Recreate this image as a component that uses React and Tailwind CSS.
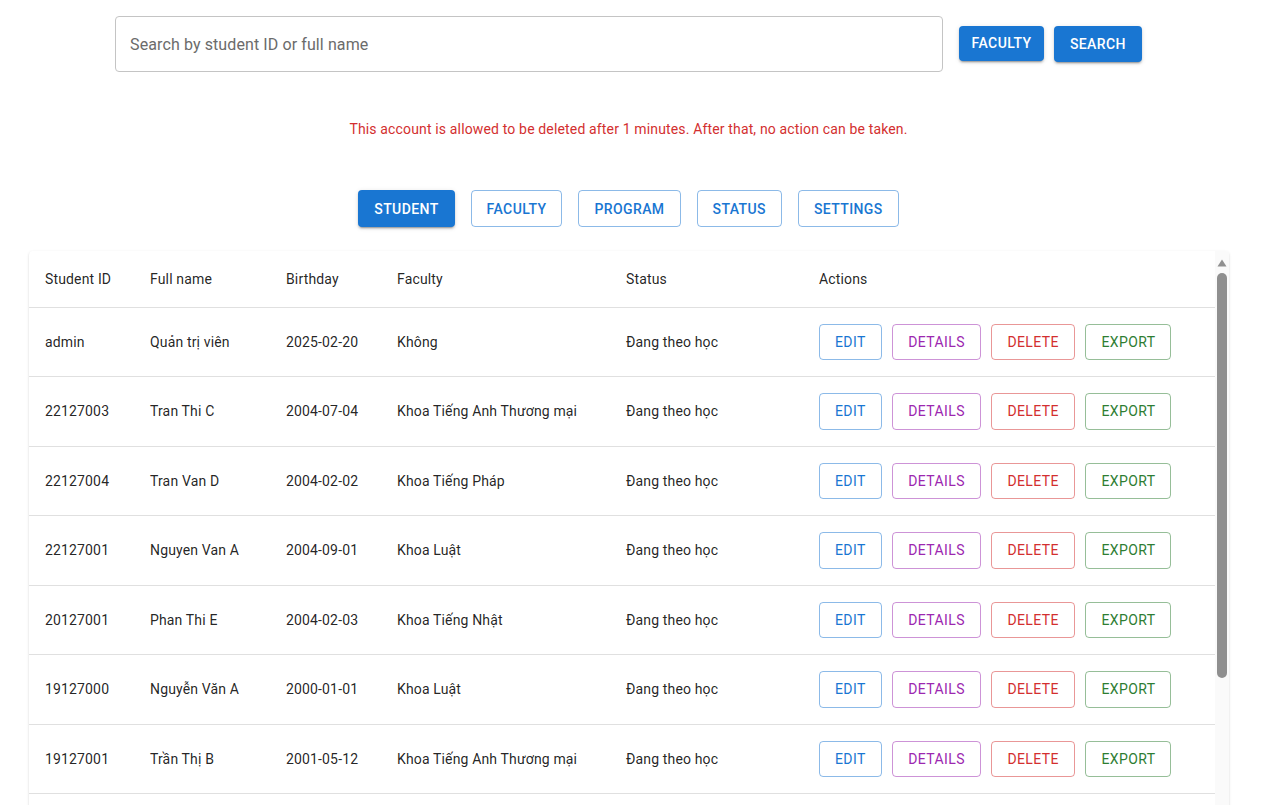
import { useState } from 'react';

const students = [
  { id: 'admin', name: 'Quản trị viên', birthday: '2025-02-20', faculty: 'Không', status: 'Đang theo học' },
  { id: '22127003', name: 'Tran Thi C', birthday: '2004-07-04', faculty: 'Khoa Tiếng Anh Thương mại', status: 'Đang theo học' },
  { id: '22127004', name: 'Tran Van D', birthday: '2004-02-02', faculty: 'Khoa Tiếng Pháp', status: 'Đang theo học' },
  { id: '22127001', name: 'Nguyen Van A', birthday: '2004-09-01', faculty: 'Khoa Luật', status: 'Đang theo học' },
  { id: '20127001', name: 'Phan Thi E', birthday: '2004-02-03', faculty: 'Khoa Tiếng Nhật', status: 'Đang theo học' },
  { id: '19127000', name: 'Nguyễn Văn A', birthday: '2000-01-01', faculty: 'Khoa Luật', status: 'Đang theo học' },
  { id: '19127001', name: 'Trần Thị B', birthday: '2001-05-12', faculty: 'Khoa Tiếng Anh Thương mại', status: 'Đang theo học' },
  { id: '19127002', name: 'Lê Văn C', birthday: '2001-03-15', faculty: 'Khoa Tiếng Pháp', status: 'Đang theo học' },
  { id: '19127003', name: 'Phạm Thị D', birthday: '2001-11-20', faculty: 'Khoa Tiếng Nhật', status: 'Đã tốt nghiệp' },
  { id: '19127004', name: 'Hoàng Văn E', birthday: '2001-08-08', faculty: 'Khoa Luật', status: 'Đang theo học' },
  { id: '19127005', name: 'Võ Thị F', birthday: '2001-12-30', faculty: 'Khoa Tiếng Anh Thương mại', status: 'Đang theo học' },
];

const tabs = ['STUDENT', 'FACULTY', 'PROGRAM', 'STATUS', 'SETTINGS'];

const containedShadow =
  'shadow-[0px_3px_1px_-2px_rgba(0,0,0,0.2),0px_2px_2px_0px_rgba(0,0,0,0.14),0px_1px_5px_0px_rgba(0,0,0,0.12)]';

const actionBtn = 'h-[36.5px] rounded border px-[15px] text-sm tracking-[0.4px]';

const App = () => {
  const [query, setQuery] = useState('');
  const [tab, setTab] = useState('STUDENT');

  return (
    <div className="h-screen overflow-hidden bg-white font-['Roboto',sans-serif] text-[rgba(0,0,0,0.87)]">
      <div className="w-[1257px]">
        <div className="flex items-center justify-center pt-4">
          <input
            type="text"
            placeholder="Search by student ID or full name"
            value={query}
            onChange={(e) => setQuery(e.target.value)}
            className="h-[56px] w-[828px] rounded border border-[#c4c4c4] px-[14px] text-base tracking-[0.1px] text-[rgba(0,0,0,0.87)] placeholder-[#6b6b6b] focus:outline-none"
          />
          <button
            type="button"
            className={`ml-4 -mt-[2px] h-[35px] rounded bg-[#1976d2] px-[12.5px] text-sm font-medium tracking-[0.4px] text-white ${containedShadow}`}
          >
            FACULTY
          </button>
          <button
            type="button"
            className={`ml-[10px] h-[36px] rounded bg-[#1976d2] px-4 text-sm font-medium tracking-[0.4px] text-white ${containedShadow}`}
          >
            SEARCH
          </button>
        </div>

        <p className="mt-[47px] text-center text-sm leading-5 tracking-[0.15px] text-[#d32f2f]">
          This account is allowed to be deleted after 1 minutes. After that, no action can be taken.
        </p>

        <div className="mt-[51px] flex justify-center gap-4">
          {tabs.map((t) =>
            t === tab ? (
              <button
                key={t}
                type="button"
                onClick={() => setTab(t)}
                className={`h-[37px] rounded bg-[#1976d2] px-4 text-sm font-medium tracking-[0.4px] text-white ${containedShadow}`}
              >
                {t}
              </button>
            ) : (
              <button
                key={t}
                type="button"
                onClick={() => setTab(t)}
                className="h-[37px] rounded border border-[rgba(25,118,210,0.5)] px-[15px] text-sm font-medium tracking-[0.4px] text-[#1976d2]"
              >
                {t}
              </button>
            )
          )}
        </div>

        <div className="ml-[29px] mt-[23.5px] flex h-[600px] w-[1200px] overflow-hidden rounded bg-white shadow-[0px_2px_1px_-1px_rgba(0,0,0,0.2),0px_1px_1px_0px_rgba(0,0,0,0.14),0px_1px_3px_0px_rgba(0,0,0,0.12)]">
          <div className="flex-1 overflow-y-auto">
            <table className="w-full table-fixed border-collapse text-left text-sm tracking-[0.15px]">
              <thead>
                <tr className="border-b border-[#e0e0e0]">
                  <th className="w-[105px] px-4 py-4 font-normal leading-6">Student ID</th>
                  <th className="w-[136px] px-4 py-4 font-normal leading-6">Full name</th>
                  <th className="w-[111px] px-4 py-4 font-normal leading-6">Birthday</th>
                  <th className="w-[229px] px-4 py-4 font-normal leading-6">Faculty</th>
                  <th className="w-[193px] px-4 py-4 font-normal leading-6">Status</th>
                  <th className="px-4 py-4 font-normal leading-6">Actions</th>
                </tr>
              </thead>
              <tbody>
                {students.map((s) => (
                  <tr key={s.id} className="border-b border-[#e0e0e0]">
                    <td className="px-4 py-4">{s.id}</td>
                    <td className="px-4 py-4">{s.name}</td>
                    <td className="px-4 py-4">{s.birthday}</td>
                    <td className="px-4 py-4">{s.faculty}</td>
                    <td className="px-4 py-4">{s.status}</td>
                    <td className="px-4 py-4">
                      <div className="flex gap-[10.5px]">
                        <button type="button" className={`${actionBtn} border-[rgba(25,118,210,0.5)] text-[#1976d2]`}>
                          EDIT
                        </button>
                        <button type="button" className={`${actionBtn} border-[rgba(156,39,176,0.5)] text-[#9c27b0]`}>
                          DETAILS
                        </button>
                        <button type="button" className={`${actionBtn} border-[rgba(211,47,47,0.5)] text-[#d32f2f]`}>
                          DELETE
                        </button>
                        <button type="button" className={`${actionBtn} border-[rgba(46,125,50,0.5)] text-[#2e7d32]`}>
                          EXPORT
                        </button>
                      </div>
                    </td>
                  </tr>
                ))}
              </tbody>
            </table>
          </div>

          {/* scrollbar */}
          <div className="flex w-[14px] flex-col items-center bg-[#fafafa]">
            <svg width="10" height="8" viewBox="0 0 10 8" className="mt-[8px]">
              <path d="M0.5 7.5 L5 0.5 L9.5 7.5 Z" fill="#909090" />
            </svg>
            <div className="mt-[6px] h-[405px] w-[10px] rounded-full bg-[#8f8f8f]" />
          </div>
        </div>
      </div>
    </div>
  );
};

export default App;
